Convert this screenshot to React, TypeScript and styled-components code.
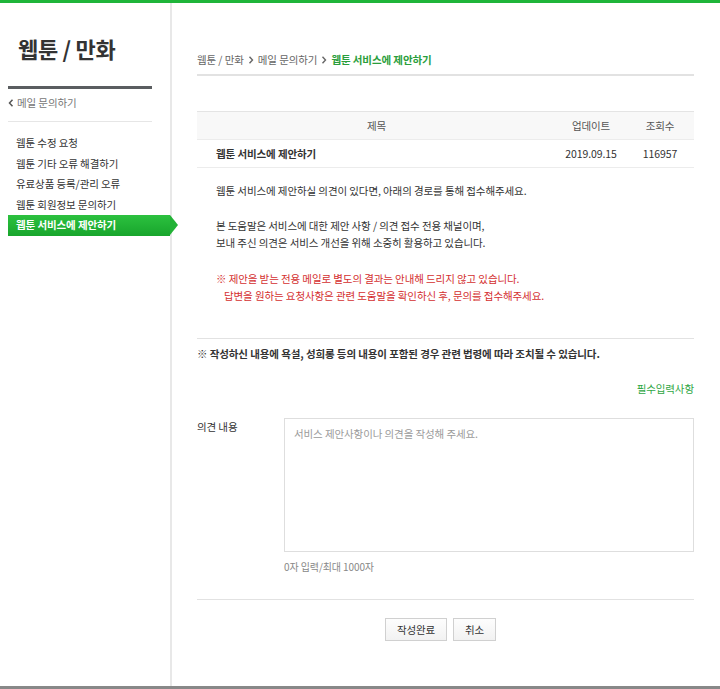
import React from "react";
import styled, { createGlobalStyle } from "styled-components";

const GlobalStyle = createGlobalStyle`
  html, body {
    margin: 0;
    padding: 0;
    background: #fff;
  }
  body {
    font-family: "Noto Sans CJK KR", "Noto Sans", sans-serif;
    font-size: 10.5px;
    letter-spacing: -0.1px;
    color: #333;
  }
  * {
    box-sizing: border-box;
  }
`;

const Page = styled.div`
  width: 720px;
  height: 689px;
  display: flex;
  flex-direction: column;
  border-top: 3px solid #1fb53a;
  border-bottom: 3px solid #888;
  overflow: hidden;
`;

const Body = styled.div`
  flex: 1;
  display: flex;
`;

const Sidebar = styled.aside`
  width: 172px;
  flex-shrink: 0;
  border-right: 2px solid #e8e8e8;
  padding: 0 18px 0 8px;
`;

const SideTitle = styled.h1`
  margin: 33px 0 0 10px;
  font-size: 22px;
  line-height: 24px;
  font-weight: 700;
  color: #333;
  letter-spacing: -0.3px;
`;

const ThickRule = styled.div`
  margin-top: 26px;
  height: 3px;
  background: #5a5d60;
`;

const BackLink = styled.a`
  display: flex;
  align-items: center;
  gap: 3px;
  margin-top: 7px;
  height: 14px;
  line-height: 14px;
  color: #777;
  text-decoration: none;
`;

const ThinRule = styled.div`
  margin-top: 11px;
  height: 1px;
  background: #e6e6e6;
`;

const Menu = styled.ul`
  list-style: none;
  margin: 11px 0 0;
  padding: 0;
`;

const MenuItem = styled.li<{ $active?: boolean }>`
  position: relative;
  height: 20.5px;
  line-height: 20.5px;
  padding-left: 8px;
  white-space: nowrap;
  color: ${(p) => (p.$active ? "#fff" : "#333")};
  font-weight: ${(p) => (p.$active ? 700 : 400)};
  background: ${(p) =>
    p.$active ? "linear-gradient(180deg, #2cc13f 0%, #18a52c 100%)" : "transparent"};
  margin-right: ${(p) => (p.$active ? "-18px" : "0")};
  ${(p) =>
    p.$active &&
    `
    &::after {
      content: "";
      position: absolute;
      right: -8px;
      top: 0;
      border-top: 10.25px solid transparent;
      border-bottom: 10.25px solid transparent;
      border-left: 8px solid #22b236;
    }
  `}
`;

const Main = styled.main`
  flex: 1;
  padding: 0 26px 0 25px;
`;

const Breadcrumb = styled.div`
  margin-top: 50px;
  line-height: 14px;
  color: #666;
  padding-bottom: 7px;
  border-bottom: 2px solid #e2e2e2;
  display: flex;
  align-items: center;
  gap: 4px;
`;

const Crumb = styled.span<{ $current?: boolean }>`
  color: ${(p) => (p.$current ? "#2a9e3c" : "#666")};
  font-weight: ${(p) => (p.$current ? 700 : 400)};
`;

const Table = styled.table`
  margin-top: 35px;
  width: 100%;
  border-collapse: collapse;
`;

const Th = styled.th<{ $w?: number }>`
  width: ${(p) => (p.$w ? `${p.$w}px` : "auto")};
  height: 28px;
  font-weight: 400;
  color: #555;
  background: #f8f8f8;
  border-top: 1px solid #e4e4e4;
  border-bottom: 1px solid #ececec;
  text-align: center;
  padding: 0;
`;

const Td = styled.td<{ $bold?: boolean; $left?: boolean }>`
  height: 28px;
  padding: 0 0 0 ${(p) => (p.$left ? "19px" : "0")};
  text-align: ${(p) => (p.$left ? "left" : "center")};
  font-weight: ${(p) => (p.$bold ? 700 : 400)};
  color: #333;
  border-bottom: 1px solid #ececec;
`;

const Content = styled.div`
  padding-left: 19px;
  margin-top: 14px;
`;

const Para = styled.p<{ $gap: number; $red?: boolean }>`
  margin: ${(p) => p.$gap}px 0 0;
  line-height: 17px;
  color: ${(p) => (p.$red ? "#d42f2f" : "#333")};
`;

const Indent = styled.span`
  display: block;
  padding-left: 8px;
`;

const Rule = styled.div<{ $mt: number }>`
  margin-top: ${(p) => p.$mt}px;
  height: 1px;
  background: #e2e2e2;
`;

const Notice = styled.p`
  margin: 6.5px 0 0;
  line-height: 17px;
  font-weight: 700;
  color: #333;
`;

const Required = styled.div`
  margin-top: 18px;
  line-height: 17px;
  text-align: right;
  color: #2fa744;
`;

const FormRow = styled.div`
  margin-top: 20.5px;
  display: flex;
`;

const Label = styled.label`
  width: 87px;
  flex-shrink: 0;
  line-height: 17px;
  color: #333;
`;

const Field = styled.div`
  flex: 1;
`;

const TextArea = styled.textarea`
  display: block;
  width: 100%;
  height: 134px;
  border: 1px solid #dedede;
  padding: 6px 9px;
  resize: none;
  font-family: inherit;
  font-size: 10.5px;
  letter-spacing: -0.1px;
  line-height: 17px;
  color: #333;
  outline: none;
  &::placeholder {
    color: #9a9a9a;
  }
`;

const Counter = styled.div`
  margin-top: 6.5px;
  line-height: 17px;
  color: #888;
  font-size: 10px;
`;

const Buttons = styled.div`
  margin-top: 18px;
  display: flex;
  justify-content: center;
  gap: 6px;
  padding-right: 10px;
`;

const Button = styled.button<{ $w: number }>`
  width: ${(p) => p.$w}px;
  height: 23px;
  border: 1px solid #d0d0d0;
  background: linear-gradient(180deg, #fdfdfd 0%, #f2f2f2 100%);
  font-family: inherit;
  font-size: 10.5px;
  letter-spacing: -0.1px;
  color: #333;
  padding: 0;
  cursor: pointer;
`;

const menu = [
  "웹툰 수정 요청",
  "웹툰 기타 오류 해결하기",
  "유료상품 등록/관리 오류",
  "웹툰 회원정보 문의하기",
  "웹툰 서비스에 제안하기",
];

function ChevronLeft() {
  return (
    <svg width="6" height="8" viewBox="0 0 6 8">
      <polyline points="4.5,0.8 1.5,4 4.5,7.2" fill="none" stroke="#555" strokeWidth="1.5" />
    </svg>
  );
}

function Arrow() {
  return (
    <svg width="6" height="8" viewBox="0 0 6 8">
      <polyline points="1.5,0.8 4.5,4 1.5,7.2" fill="none" stroke="#666" strokeWidth="1.4" />
    </svg>
  );
}

export default function App() {
  return (
    <>
      <GlobalStyle />
      <Page>
        <Body>
          <Sidebar>
            <SideTitle>웹툰 / 만화</SideTitle>
            <ThickRule />
            <BackLink href="#">
              <ChevronLeft />
              메일 문의하기
            </BackLink>
            <ThinRule />
            <Menu>
              {menu.map((m, i) => (
                <MenuItem key={m} $active={i === menu.length - 1}>
                  {m}
                </MenuItem>
              ))}
            </Menu>
          </Sidebar>
          <Main>
            <Breadcrumb>
              <Crumb>웹툰 / 만화</Crumb>
              <Arrow />
              <Crumb>메일 문의하기</Crumb>
              <Arrow />
              <Crumb $current>웹툰 서비스에 제안하기</Crumb>
            </Breadcrumb>

            <Table>
              <thead>
                <tr>
                  <Th>제목</Th>
                  <Th $w={70}>업데이트</Th>
                  <Th $w={68}>조회수</Th>
                </tr>
              </thead>
              <tbody>
                <tr>
                  <Td $bold $left>
                    웹툰 서비스에 제안하기
                  </Td>
                  <Td>2019.09.15</Td>
                  <Td>116957</Td>
                </tr>
              </tbody>
            </Table>

            <Content>
              <Para $gap={0}>웹툰 서비스에 제안하실 의견이 있다면, 아래의 경로를 통해 접수해주세요.</Para>
              <Para $gap={18}>
                본 도움말은 서비스에 대한 제안 사항 / 의견 접수 전용 채널이며,
                <br />
                보내 주신 의견은 서비스 개선을 위해 소중히 활용하고 있습니다.
              </Para>
              <Para $gap={19} $red>
                ※ 제안을 받는 전용 메일로 별도의 결과는 안내해 드리지 않고 있습니다.
                <Indent>답변을 원하는 요청사항은 관련 도움말을 확인하신 후, 문의를 접수해주세요.</Indent>
              </Para>
            </Content>

            <Rule $mt={33.5} />
            <Notice>※ 작성하신 내용에 욕설, 성희롱 등의 내용이 포함된 경우 관련 법령에 따라 조치될 수 있습니다.</Notice>
            <Required>필수입력사항</Required>

            <FormRow>
              <Label>의견 내용</Label>
              <Field>
                <TextArea placeholder="서비스 제안사항이나 의견을 작성해 주세요." />
                <Counter>0자 입력/최대 1000자</Counter>
              </Field>
            </FormRow>

            <Rule $mt={23.5} />
            <Buttons>
              <Button $w={62}>작성완료</Button>
              <Button $w={43}>취소</Button>
            </Buttons>
          </Main>
        </Body>
      </Page>
    </>
  );
}
